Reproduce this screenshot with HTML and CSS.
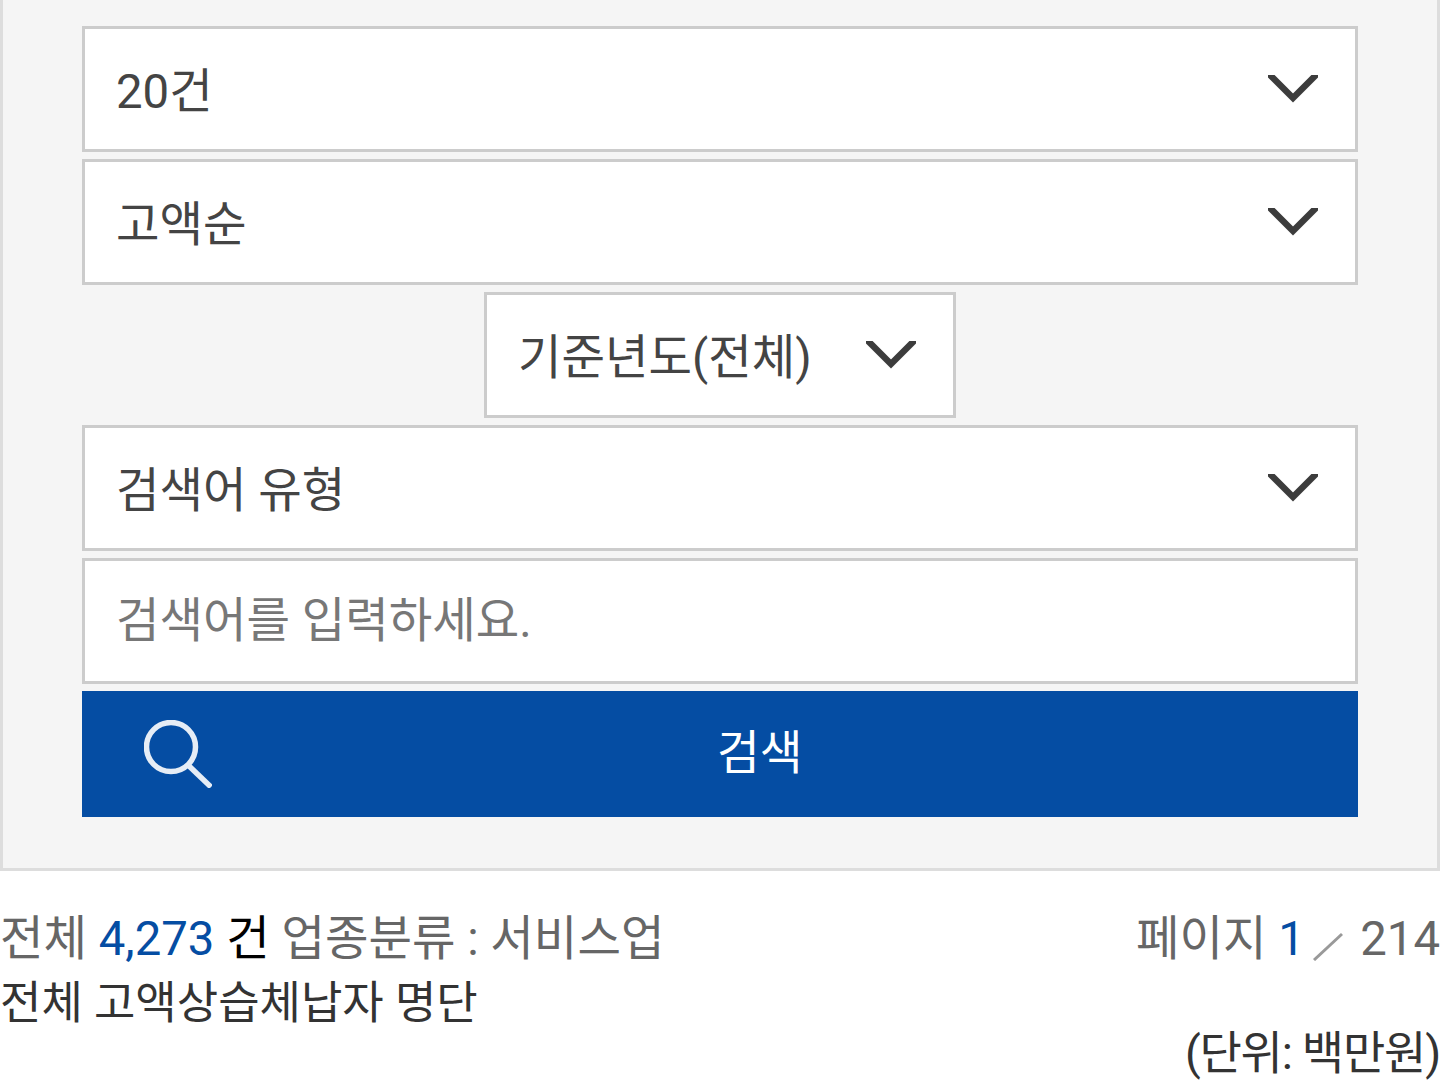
FILE: index.html
```html
<!DOCTYPE html>
<html lang="ko">
<head>
    <meta charset="UTF-8">
    <title>고액상습체납자 명단</title>
    <link rel="stylesheet" href="styles.css">
</head>
<body>
    <form class="search-panel">
        <div class="field">
            <span>20건</span>
            <svg class="chevron" viewBox="0 0 50 28"><path d="M1 -1 L25 23 L49 -1"/></svg>
        </div>
        <div class="field">
            <span>고액순</span>
            <svg class="chevron" viewBox="0 0 50 28"><path d="M1 -1 L25 23 L49 -1"/></svg>
        </div>
        <div class="field field-year">
            <span>기준년도(전체)</span>
            <svg class="chevron" viewBox="0 0 50 28"><path d="M1 -1 L25 23 L49 -1"/></svg>
        </div>
        <div class="field">
            <span>검색어 유형</span>
            <svg class="chevron" viewBox="0 0 50 28"><path d="M1 -1 L25 23 L49 -1"/></svg>
        </div>
        <div class="field">
            <span class="placeholder">검색어를 입력하세요.</span>
        </div>
        <button type="button" class="search-button">
            <svg class="search-icon" viewBox="0 0 68 68"><circle cx="27" cy="27" r="24.5"/><path d="M44 45 L67 67"/></svg>
            <span>검색</span>
        </button>
    </form>

    <div class="summary">
        <div class="summary-left">
            <div class="count-line">전체 <em>4,273</em> <b>건</b> 업종분류 : 서비스업</div>
            <div class="title-line">전체 고액상습체납자 명단</div>
        </div>
        <div class="paging">페이지 <em>1</em> <svg class="slash" viewBox="0 0 30 30"><path d="M1 29 L29 3"/></svg> 214</div>
    </div>
    <div class="unit">(단위: 백만원)</div>
    <div class="table-top"></div>
</body>
</html>
```

FILE: styles.css
```css
html, body {
    margin: 0;
    height: 1083px;
    overflow: hidden;
}
body {
    font-family: Roboto, "Noto Sans CJK KR", sans-serif;
    background-color: #fff;
    color: #333;
    display: flex;
    flex-direction: column;
}
.search-panel {
    height: 871px;
    flex: none;
    box-sizing: border-box;
    padding: 26px 79px 0;
    background-color: #f5f5f5;
    border: 3px solid #ddd;
    border-top: none;
    display: flex;
    flex-direction: column;
    gap: 7px;
}
.field {
    height: 126px;
    box-sizing: border-box;
    flex: none;
    padding: 0 37px 4px 31px;
    background-color: #fff;
    border: 3px solid #ccc;
    color: #444;
    font-size: 47.3px;
    display: flex;
    align-items: center;
    justify-content: space-between;
}
.field-year {
    width: 472px;
    align-self: center;
}
.placeholder {
    color: #777;
    margin-bottom: 6px;
}
.chevron {
    width: 50px;
    height: 28px;
    margin-top: 4px;
    filter: blur(0.6px);
}
.chevron path {
    fill: none;
    stroke: #3c3c3c;
    stroke-width: 6.5;
}
.search-button {
    height: 126px;
    flex: none;
    padding: 0 0 0 62px;
    border: none;
    background-color: #054da3;
    color: #fff;
    font: inherit;
    font-size: 46.5px;
    display: flex;
    align-items: center;
}
.search-icon {
    width: 68px;
    height: 68px;
    filter: blur(0.6px);
}
.search-icon circle, .search-icon path {
    fill: none;
    stroke: #e6edf6;
    stroke-width: 5.5;
}
.search-button span {
    margin: 0 0 11px 505px;
}
.summary {
    display: flex;
    justify-content: space-between;
    flex: none;
    font-size: 47.3px;
    line-height: 62px;
    margin-top: 37px;
}
.count-line {
    color: #666;
}
.count-line em, .paging em {
    font-style: normal;
    color: #054da3;
}
.count-line b {
    font-weight: normal;
    color: #000;
}
.title-line {
    font-size: 45px;
    margin-top: 3px;
}
.paging {
    color: #666;
}
.slash {
    width: 30px;
    height: 30px;
    margin: 0 6px 0 -4px;
    vertical-align: -6px;
    filter: blur(0.4px);
}
.slash path {
    fill: none;
    stroke: #999;
    stroke-width: 3;
}
.unit {
    flex: none;
    text-align: right;
    font-size: 46px;
    letter-spacing: -1.2px;
    line-height: 60px;
    margin-top: -12px;
}
.table-top {
    height: 4px;
    flex: none;
    margin-top: auto;
    background-color: #2f4468;
}
```
